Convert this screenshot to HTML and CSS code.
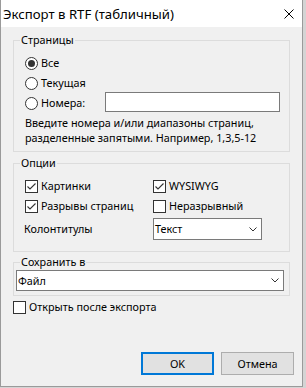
FILE: index.html
```html
<!DOCTYPE html>
<html lang="ru">
<head>
<meta charset="utf-8">
<title>Экспорт в RTF (табличный)</title>
<link rel="stylesheet" href="styles.css">
</head>
<body>
<div class="window">
  <div class="titlebar">
    <span class="title">Экспорт в RTF (табличный)</span>
    <svg class="close" width="10" height="10" viewBox="0 0 10 10"><path d="M0.5 0.5 L9.5 9.5 M9.5 0.5 L0.5 9.5" stroke="#000" stroke-width="1" fill="none"/></svg>
  </div>
  <div class="content">
    <fieldset class="group g-pages">
      <legend>Страницы</legend>
      <div class="gb-body pages-body">
        <div class="row"><span class="radio checked"></span><span class="lbl">Все</span></div>
        <div class="row"><span class="radio"></span><span class="lbl">Текущая</span></div>
        <div class="row"><span class="radio"></span><span class="lbl">Номера:</span><span class="textbox"></span></div>
        <div class="hint">
          <div class="hint-line">Введите номера и/или диапазоны страниц,</div>
          <div class="hint-line">разделенные запятыми. Например, 1,3,5-12</div>
        </div>
      </div>
    </fieldset>
    <fieldset class="group g-opts">
      <legend>Опции</legend>
      <div class="gb-body opts-body">
        <div class="row"><span class="check on"><svg width="11" height="11" viewBox="0 0 11 11"><path d="M1.5 5.5 L4 8 L9.5 2.5" stroke="#333" stroke-width="1.1" fill="none"/></svg></span><span class="lbl">Картинки</span></div>
        <div class="row"><span class="check on"><svg width="11" height="11" viewBox="0 0 11 11"><path d="M1.5 5.5 L4 8 L9.5 2.5" stroke="#333" stroke-width="1.1" fill="none"/></svg></span><span class="lbl">WYSIWYG</span></div>
        <div class="row"><span class="check on"><svg width="11" height="11" viewBox="0 0 11 11"><path d="M1.5 5.5 L4 8 L9.5 2.5" stroke="#333" stroke-width="1.1" fill="none"/></svg></span><span class="lbl">Разрывы страниц</span></div>
        <div class="row"><span class="check"></span><span class="lbl">Неразрывный</span></div>
        <div class="row combo-row"><span class="plain">Колонтитулы</span></div>
        <div class="row combo-row"><span class="combo combo-small"><span>Текст</span><svg width="8" height="5" viewBox="0 0 8 5"><path d="M0.5 0.5 L4 4 L7.5 0.5" stroke="#333" stroke-width="1" fill="none"/></svg></span></div>
      </div>
    </fieldset>
    <fieldset class="group g-save">
      <legend>Сохранить в</legend>
      <div class="gb-body save-body">
        <span class="combo combo-wide"><span>Файл</span><svg width="8" height="5" viewBox="0 0 8 5"><path d="M0.5 0.5 L4 4 L7.5 0.5" stroke="#333" stroke-width="1" fill="none"/></svg></span>
      </div>
    </fieldset>
    <div class="row open-row"><span class="check"></span><span class="lbl">Открыть после экспорта</span></div>
    <div class="buttons">
      <span class="btn default">OK</span>
      <span class="btn">Отмена</span>
    </div>
  </div>
</div>
</body>
</html>
```

FILE: styles.css
```css
* { box-sizing: border-box; }
html, body { margin: 0; padding: 0; }
body {
  background: #d4d4d4;
  font-family: "Noto Sans", "Open Sans", sans-serif;
  font-size: 10.8px;
  line-height: 14px;
  color: #000;
  width: 306px;
  height: 388px;
  overflow: hidden;
}
.window {
  width: 303px;
  height: 387px;
  background: #f0f0f0;
  border-left: 1px solid #9a9a9a;
  border-right: 1px solid #9a9a9a;
  border-bottom: 1px solid #9a9a9a;
  display: flex;
  flex-direction: column;
}
.titlebar {
  height: 27px;
  background: #fff;
  display: flex;
  align-items: center;
  justify-content: space-between;
  padding: 0 8px 0 2px;
  flex: none;
}
.title { font-size: 13.2px; line-height: 16px; }
.close { display: block; margin-top: 1px; }
.content {
  padding: 6px 8px 0 12px;
}
.group {
  margin: 0 4px 0 0;
  padding: 0;
  min-width: 0;
  border: 1px solid #dcdcdc;
}
.group legend {
  margin-left: 6px;
  padding: 0 1px;
  line-height: 14px;
}
.gb-body { padding-left: 11px; }
.pages-body { padding: 6px 9px 6px 11px; }
.row {
  display: flex;
  align-items: center;
  height: 20px;
}
.radio {
  width: 13px;
  height: 13px;
  border: 1px solid #333;
  border-radius: 50%;
  background: #fff;
  flex: none;
  display: flex;
  align-items: center;
  justify-content: center;
}
.radio.checked::after {
  content: "";
  width: 7px;
  height: 7px;
  border-radius: 50%;
  background: #333;
}
.lbl { margin-left: 3px; white-space: nowrap; }
.textbox {
  margin-left: auto;
  width: 175px;
  height: 20px;
  border: 1px solid #7a7a7a;
  background: #fff;
  margin-top: -2px;
}
.hint {
  margin-top: 2px;
}
.hint-line {
  height: 15px;
  line-height: 15px;
  white-space: nowrap;
}
.g-opts { margin-top: 4px; }
.opts-body {
  padding: 6px 0 11px 11px;
  display: grid;
  grid-template-columns: 128px auto;
}
.check {
  width: 13px;
  height: 13px;
  border: 1px solid #333;
  background: #fff;
  flex: none;
  display: flex;
  align-items: center;
  justify-content: center;
}
.check svg { display: block; }
.combo-row { height: 22px; margin-top: 2px; }
.plain { margin-left: -1px; }
.combo {
  display: flex;
  align-items: center;
  justify-content: space-between;
  background: #fff;
  border: 1px solid #7a7a7a;
  padding: 0 4px 0 1px;
}
.combo svg { display: block; }
.combo-small { width: 109px; height: 22px; }
.g-save { margin-top: 3px; }
.save-body { padding: 1px 5px 4px 2px; }
.combo-wide { width: 268px; height: 21px; }
.open-row { margin-top: 1px; }
.open-row .lbl { margin-left: 3px; }
.buttons {
  display: flex;
  justify-content: flex-end;
  gap: 7px;
  margin-top: 35px;
}
.btn {
  width: 73px;
  height: 23px;
  background: #e1e1e1;
  border: 1px solid #adadad;
  display: flex;
  align-items: center;
  justify-content: center;
}
.btn.default { border: 2px solid #0078d7; }
```
